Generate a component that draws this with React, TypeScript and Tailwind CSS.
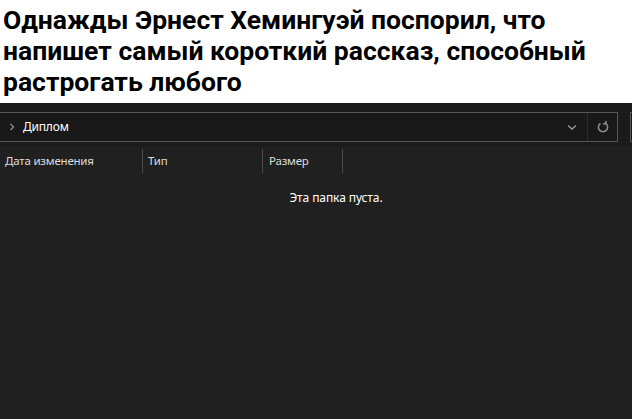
import React from "react";

export default function App() {
  const ui = { fontFamily: '"Noto Sans", "Open Sans", sans-serif' };
  return (
    <div className="w-[632px] h-[419px] overflow-hidden bg-white flex flex-col">
      <div
        className="h-[103px] shrink-0 pl-[3px] pt-[4px] text-black font-bold text-[26.5px] leading-[31px] whitespace-nowrap"
        style={{ fontFamily: 'Roboto, "Liberation Sans", sans-serif' }}
      >
        Однажды Эрнест Хемингуэй поспорил, что
        <br />
        напишет самый короткий рассказ, способный
        <br />
        растрогать любого
      </div>
      <div className="flex-1 bg-[#202020] flex flex-col" style={ui}>
        <div className="h-[44px] shrink-0 bg-[#1b1b1b] pt-[9px] flex">
          <div className="w-[619px] shrink-0 ml-[-1px] h-[30px] border border-[#555555] bg-[#191919] flex items-center">
            <svg width="10" height="10" viewBox="0 0 10 10" className="ml-[7px]">
              <path d="M3.5 2 L6.5 5 L3.5 8" stroke="#8c8c8c" strokeWidth="1.3" fill="none" />
            </svg>
            <span className="ml-[6px] text-[12px] text-white leading-none tracking-[-0.2px]">Диплом</span>
            <div className="flex-1" />
            <svg width="12" height="12" viewBox="0 0 12 12" className="mr-[9px]">
              <path d="M2 4.5 L6 8 L10 4.5" stroke="#9a9a9a" strokeWidth="1.4" fill="none" />
            </svg>
            <div className="w-[1px] h-[28px] bg-[#2c2c2c]" />
            <div className="w-[29px] h-[28px] flex items-center justify-center">
              <svg width="14" height="14" viewBox="0 0 14 14">
                <path
                  d="M9.6 3.3 A4.6 4.6 0 1 1 4.4 3.3"
                  stroke="#8a8a8a"
                  strokeWidth="1.6"
                  fill="none"
                />
                <path d="M9.8 0.9 L9.8 3.8 L7 3.8" stroke="#8a8a8a" strokeWidth="1.6" fill="none" />
              </svg>
            </div>
          </div>
          <div className="ml-[12px] w-[20px] shrink-0 h-[30px] border-l border-t border-b border-[#555555] bg-[#191919]" />
        </div>
        <div className="h-[28px] shrink-0 flex items-center text-[11.5px] tracking-[-0.2px] text-[#dcdcdc]">
          <div className="w-[142px] pl-[5px]">Дата изменения</div>
          <div className="w-[1px] h-[24px] bg-[#4a4a4a]" />
          <div className="w-[119px] pl-[5px]">Тип</div>
          <div className="w-[1px] h-[24px] bg-[#4a4a4a]" />
          <div className="w-[79px] pl-[6px]">Размер</div>
          <div className="w-[1px] h-[24px] bg-[#4a4a4a]" />
        </div>
        <div className="pt-[14px] pl-[40px] text-center text-[12px] text-white tracking-[-0.1px]">
          Эта папка пуста.
        </div>
      </div>
    </div>
  );
}
